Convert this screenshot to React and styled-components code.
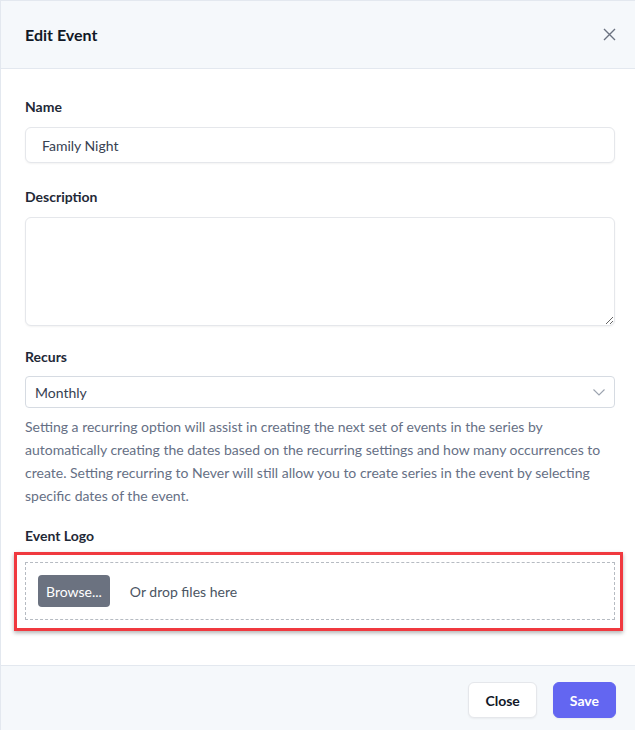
import React from 'react'
import styled, { createGlobalStyle } from 'styled-components'

const GlobalStyle = createGlobalStyle`
  html, body {
    margin: 0;
    padding: 0;
    overflow: hidden;
    background: #ffffff;
  }
  body {
    font-family: Lato, "Noto Sans", sans-serif;
    color: #1f2937;
  }
`

const Modal = styled.div`
  width: 640px;
  box-sizing: border-box;
  border: 1px solid #e3e8ef;
  background: #fff;
`

const Header = styled.div`
  height: 67px;
  display: flex;
  align-items: center;
  justify-content: space-between;
  padding: 0 24px;
  background: #f5f8fb;
  border-bottom: 1px solid #e3e8ef;
`

const Title = styled.h3`
  margin: 0;
  font-size: 16px;
  font-weight: 700;
  color: #111827;
`

const CloseIcon = styled.button`
  border: 0;
  background: none;
  padding: 0;
  margin-right: -1px;
  display: flex;
  color: #6b7280;
  cursor: pointer;
`

const Body = styled.div`
  padding: 28px 24px 45px;
  display: flex;
  flex-direction: column;
`

const Field = styled.div`
  display: flex;
  flex-direction: column;
  margin-bottom: ${p => p.$mb ?? 24}px;
`

const Label = styled.label`
  font-size: 14px;
  font-weight: 700;
  color: #1f2937;
  line-height: 20px;
  margin-bottom: ${p => p.$gap ?? 10}px;
`

const Input = styled.input`
  height: 36px;
  box-sizing: border-box;
  border: 1px solid #e5e7eb;
  border-radius: 6px;
  box-shadow: 0 1px 2px rgba(0, 0, 0, 0.05);
  padding: 0 16px;
  font: inherit;
  font-size: 14px;
  color: #374151;
  outline: none;
`

const TextArea = styled.textarea`
  height: 109px;
  box-sizing: border-box;
  border: 1px solid #e5e7eb;
  border-radius: 6px;
  box-shadow: 0 1px 2px rgba(0, 0, 0, 0.05);
  padding: 8px 16px;
  font: inherit;
  font-size: 14px;
  outline: none;
  resize: vertical;
`

const SelectBox = styled.div`
  height: 32px;
  box-sizing: border-box;
  border: 1px solid #d6dbe2;
  border-radius: 4px;
  display: flex;
  align-items: center;
  justify-content: space-between;
  padding: 0 9px 0 9px;
  font-size: 14px;
  color: #374151;
`

const Help = styled.p`
  margin: 7px 0 0;
  font-size: 14px;
  line-height: 23px;
  color: #667085;
`

const DropWrap = styled.div`
  position: relative;

  &::after {
    content: '';
    position: absolute;
    left: -11px;
    right: -8px;
    top: -10px;
    bottom: -11px;
    border: 3px solid #f0393f;
    box-shadow: 0 2px 4px rgba(0, 0, 0, 0.3);
    pointer-events: none;
  }
`

const DropZone = styled.div`
  height: 58px;
  box-sizing: border-box;
  border: 1px dashed #b6bbc2;
  display: flex;
  align-items: center;
  padding: 0 12px;
  gap: 20px;
`

const BrowseButton = styled.button`
  height: 32px;
  padding: 0 8px;
  border: 0;
  border-radius: 4px;
  background: #6b7280;
  color: #fff;
  font: inherit;
  font-size: 14px;
`

const DropText = styled.span`
  font-size: 14px;
  color: #4b5563;
`

const Footer = styled.div`
  background: #f5f8fb;
  border-top: 1px solid #e3e8ef;
  padding: 16px 23px 17px;
  display: flex;
  justify-content: flex-end;
  gap: 16px;
`

const Button = styled.button`
  height: 36px;
  padding: 0 ${p => (p.$primary ? 16 : 16)}px;
  border-radius: 6px;
  font: inherit;
  font-size: 14px;
  font-weight: 700;
  border: 1px solid ${p => (p.$primary ? '#6366f1' : '#e5e7eb')};
  background: ${p => (p.$primary ? '#6366f1' : '#fff')};
  color: ${p => (p.$primary ? '#fff' : '#111827')};
  box-shadow: 0 1px 2px rgba(0, 0, 0, 0.05);
`

const App = () => {
  return (
    <>
      <GlobalStyle />
      <Modal>
        <Header>
          <Title>Edit Event</Title>
          <CloseIcon aria-label="Close">
            <svg width="13" height="13" viewBox="0 0 13 13" fill="none" stroke="currentColor" strokeWidth="1.4">
              <path d="M1 1l11 11M12 1L1 12" />
            </svg>
          </CloseIcon>
        </Header>
        <Body>
          <Field>
            <Label>Name</Label>
            <Input defaultValue="Family Night" />
          </Field>
          <Field $mb={21}>
            <Label>Description</Label>
            <TextArea />
          </Field>
          <Field $mb={19}>
            <Label $gap={9}>Recurs</Label>
            <SelectBox>
              <span>Monthly</span>
              <svg width="12" height="7" viewBox="0 0 12 7" fill="none" stroke="#9ca3af" strokeWidth="1.1">
                <path d="M0.5 0.5l5.5 5.5 5.5-5.5" />
              </svg>
            </SelectBox>
            <Help>
              Setting a recurring option will assist in creating the next set of events in the series by
              automatically creating the dates based on the recurring settings and how many occurrences to
              create. Setting recurring to Never will still allow you to create series in the event by
              selecting specific dates of the event.
            </Help>
          </Field>
          <Field $mb={0}>
            <Label $gap={16}>Event Logo</Label>
            <DropWrap>
              <DropZone>
                <BrowseButton>Browse...</BrowseButton>
                <DropText>Or drop files here</DropText>
              </DropZone>
            </DropWrap>
          </Field>
        </Body>
        <Footer>
          <Button>Close</Button>
          <Button $primary>Save</Button>
        </Footer>
      </Modal>
    </>
  )
}

export default App
